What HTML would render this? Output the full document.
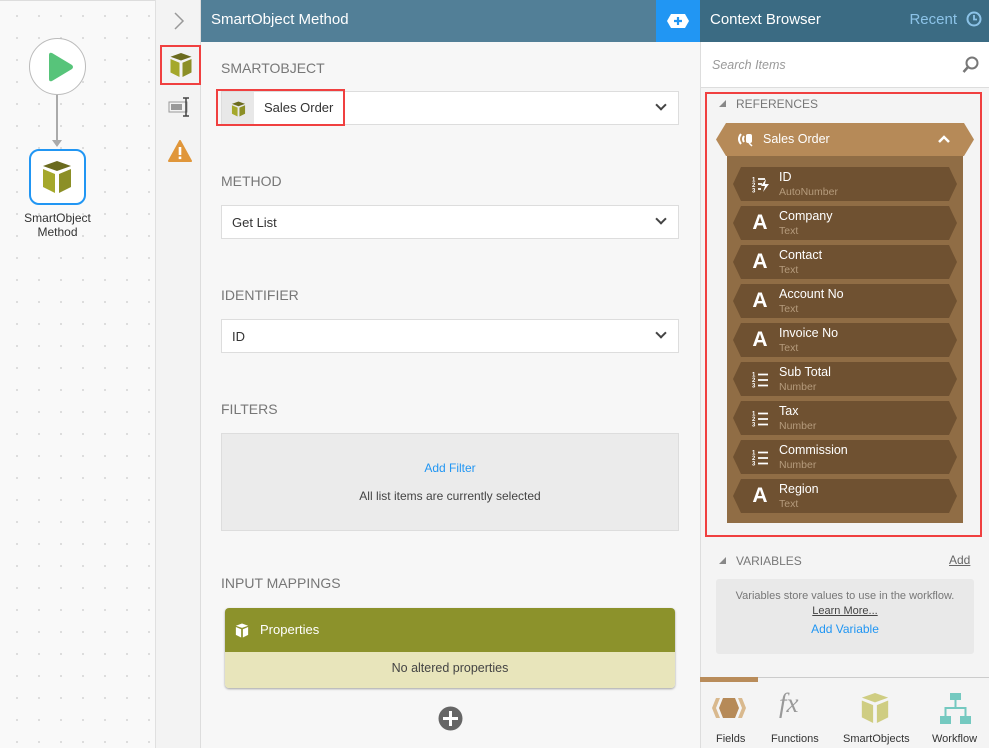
<!DOCTYPE html>
<html><head><meta charset="utf-8"><style>
*{box-sizing:border-box;margin:0;padding:0}
body{width:989px;height:748px;overflow:hidden;font-family:"Liberation Sans",sans-serif;background:#f8f8f8;position:relative}
.abs{position:absolute}
.canvas{left:0;top:0;width:155px;height:748px;background-color:#f9f9f9;background-image:radial-gradient(circle,#d4d4d4 0.8px,transparent 1px);background-size:22px 22px;background-position:6px 4px;border-top:1px solid #ddd}
.side{left:155px;top:0;width:46px;height:748px;background:#f3f3f3;border-left:1px solid #e0e0e0;border-right:1px solid #ddd}
.mid{left:201px;top:0;width:499px;height:748px;background:#f7f7f7}
.mh{left:201px;top:0;width:455px;height:42px;background:#527f97;color:#fff;font-size:15px;padding:11px 10px}
.lbl{color:#777;font-size:14px;left:221px}
.sel{left:221px;width:458px;height:34px;background:#fff;border:1px solid #ddd;font-size:13px;color:#333;padding:9px 10px}
.chev{position:absolute;right:13px;top:9px;width:8px;height:8px;border-right:2.5px solid #444;border-bottom:2.5px solid #444;transform:rotate(45deg)}
.right{left:700px;top:0;width:289px;height:748px;background:#f4f4f4;border-left:1px solid #ddd}
.rh{left:700px;top:0;width:289px;height:42px;background:#3b6b83;color:#fff;font-size:15px;padding:11px 10px}
.item{position:absolute;left:733px;width:224px;height:34px;background:#6f5131;clip-path:polygon(8px 0,216px 0,224px 50%,216px 100%,8px 100%,0 50%)}
.item .ic{position:absolute;left:19px;top:5px;color:#fff;font-weight:bold;font-size:21px;width:16px;text-align:center}
.item svg{position:absolute;left:19px;top:9px}
.item .n{position:absolute;left:46px;top:3px;color:#fff;font-size:12.5px}
.item .t{position:absolute;left:46px;top:19px;color:#b59b7c;font-size:10.5px}
.tab{position:absolute;top:733px;font-size:11px;color:#333;text-align:center}
</style></head><body>
<div class="abs canvas"></div>
<div class="abs" style="left:29px;top:38px;width:57px;height:57px;border-radius:50%;background:#fff;border:1px solid #bbb"></div>
<svg class="abs" style="left:46px;top:52px" width="28" height="30"><path d="M3 3 Q3 0 6 1 L26 13 Q28 15 26 17 L6 29 Q3 30 3 27Z" fill="#57c47a"/></svg>
<div class="abs" style="left:56px;top:95px;width:2px;height:48px;background:#aaa"></div>
<svg class="abs" style="left:52px;top:140px" width="10" height="8"><path d="M0 0 L10 0 L5 7Z" fill="#aaa"/></svg>
<div class="abs" style="left:29px;top:149px;width:57px;height:56px;border-radius:10px;background:#fff;border:2px solid #2196f3"></div>
<svg class="abs" style="left:41px;top:160px" width="32" height="34" viewBox="0 0 32 34"><path d="M16 1 L30 6 L16 11 L2 6Z" fill="#6b6b1e"/><path d="M2 9 L14 14 L14 33 L2 27Z" fill="#a5a82b"/><path d="M30 9 L18 14 L18 33 L30 27Z" fill="#8c8f26"/></svg>
<div class="abs" style="left:0;top:211px;width:115px;text-align:center;font-size:12px;color:#333;line-height:14px">SmartObject<br>Method</div>

<div class="abs side"></div>
<svg class="abs" style="left:173px;top:12px" width="12" height="18"><path d="M2 1 L10 9 L2 17" stroke="#999" stroke-width="1.5" fill="none"/></svg>
<div class="abs" style="left:160px;top:45px;width:41px;height:40px;border:2px solid #f04040"></div>
<svg class="abs" style="left:169px;top:52px" width="24" height="26" viewBox="0 0 32 34"><path d="M16 1 L30 6 L16 11 L2 6Z" fill="#6b6b1e"/><path d="M2 9 L14 14 L14 33 L2 27Z" fill="#a5a82b"/><path d="M30 9 L18 14 L18 33 L30 27Z" fill="#8c8f26"/></svg>
<svg class="abs" style="left:168px;top:96px" width="24" height="22"><rect x="1" y="6" width="18" height="10" fill="none" stroke="#999"/><rect x="3" y="8" width="11" height="6" fill="#999"/><path d="M18 2 V20 M15 2 H21 M15 20 H21" stroke="#444" stroke-width="1.5"/></svg>
<svg class="abs" style="left:168px;top:140px" width="24" height="22"><path d="M12 1 L23 21 L1 21Z" fill="#e0963a" stroke="#e0963a" stroke-linejoin="round" stroke-width="2"/><rect x="10.7" y="7" width="2.6" height="8" fill="#fff"/><rect x="10.7" y="16.5" width="2.6" height="2.6" fill="#fff"/></svg>

<div class="abs mid"></div>
<div class="abs mh">SmartObject Method</div>
<div class="abs" style="left:656px;top:0;width:44px;height:42px;background:#2196f3"></div>
<svg class="abs" style="left:666px;top:13px" width="24" height="16"><path d="M5 1 H19 L23 8 L19 15 H5 L1 8Z" fill="#fff"/><path d="M12 4 V12 M8 8 H16" stroke="#2196f3" stroke-width="2.2"/></svg>

<div class="abs lbl" style="top:60px">SMARTOBJECT</div>
<div class="abs sel" style="top:91px;padding:0"><div class="abs" style="left:0;top:0;width:32px;height:32px;background:#e8e8e8"></div>
<svg class="abs" style="left:9px;top:9px" width="15" height="16" viewBox="0 0 32 34"><path d="M16 1 L30 6 L16 11 L2 6Z" fill="#6b6b1e"/><path d="M2 9 L14 14 L14 33 L2 27Z" fill="#a5a82b"/><path d="M30 9 L18 14 L18 33 L30 27Z" fill="#8c8f26"/></svg>
<span class="abs" style="left:42px;top:8px">Sales Order</span><span class="chev"></span></div>
<div class="abs" style="left:216px;top:89px;width:129px;height:37px;border:2px solid #f04040"></div>

<div class="abs lbl" style="top:173px">METHOD</div>
<div class="abs sel" style="top:205px">Get List<span class="chev"></span></div>
<div class="abs lbl" style="top:287px">IDENTIFIER</div>
<div class="abs sel" style="top:319px">ID<span class="chev"></span></div>
<div class="abs lbl" style="top:401px">FILTERS</div>
<div class="abs" style="left:221px;top:433px;width:458px;height:98px;background:#ebebeb;border:1px solid #ddd;text-align:center;font-size:12px">
<div style="color:#2196f3;margin-top:27px">Add Filter</div><div style="color:#444;margin-top:14px">All list items are currently selected</div></div>
<div class="abs lbl" style="top:575px">INPUT MAPPINGS</div>
<div class="abs" style="left:225px;top:608px;width:450px;height:80px;border-radius:4px;box-shadow:0 1px 2px rgba(0,0,0,.35);overflow:hidden">
<div style="height:44px;background:#8c922b;color:#fff;font-size:13px;padding:14px 0 0 35px;position:relative">Properties
<svg class="abs" style="left:10px;top:15px" width="14" height="15" viewBox="0 0 32 34"><path d="M16 1 L30 6 L16 11 L2 6Z" fill="#fff"/><path d="M2 9 L14 14 L14 33 L2 27Z" fill="#fff"/><path d="M30 9 L18 14 L18 33 L30 27Z" fill="#fff"/></svg></div>
<div style="height:36px;background:#e8e5bb;text-align:center;font-size:12.5px;color:#444;padding-top:9px">No altered properties</div></div>
<svg class="abs" style="left:438px;top:706px" width="25" height="25"><circle cx="12.5" cy="12.5" r="12" fill="#666"/><path d="M12.5 5 V20 M5 12.5 H20" stroke="#fff" stroke-width="3"/></svg>

<div class="abs right"></div>
<div class="abs rh">Context Browser<span style="position:absolute;right:32px;top:11px;color:#8cc3e8">Recent</span>
<svg class="abs" style="right:7px;top:11px" width="16" height="16"><circle cx="8" cy="8" r="6.5" fill="none" stroke="#8cc3e8" stroke-width="2"/><path d="M8 4 V8.5 H11" stroke="#8cc3e8" stroke-width="1.8" fill="none"/></svg></div>
<div class="abs" style="left:701px;top:42px;width:288px;height:46px;background:#fff;border-bottom:1px solid #ddd"></div>
<div class="abs" style="left:712px;top:58px;font-size:12.5px;color:#999;font-style:italic">Search Items</div>
<svg class="abs" style="left:962px;top:56px" width="18" height="18"><circle cx="10" cy="7" r="5.5" fill="none" stroke="#777" stroke-width="2"/><path d="M6 11 L1.5 16" stroke="#777" stroke-width="2.5"/></svg>
<div class="abs" style="left:705px;top:92px;width:277px;height:445px;border:2px solid #f04040"></div>
<svg class="abs" style="left:719px;top:100px" width="7" height="7"><path d="M0 7 H7 V0Z" fill="#888"/></svg>
<div class="abs" style="left:736px;top:97px;font-size:12px;color:#777">REFERENCES</div>
<div class="abs" style="left:727px;top:155px;width:236px;height:368px;background:#906d45"></div>
<div class="abs" style="left:716px;top:123px;width:258px;height:33px;background:#b68a58;clip-path:polygon(10px 0,248px 0,258px 50%,248px 100%,10px 100%,0 50%)"></div>
<div class="abs" style="left:763px;top:132px;color:#fff;font-size:12.5px">Sales Order</div>
<svg class="abs" style="left:737px;top:131px" width="18" height="16"><path d="M4 3 Q0 8 4 13 M7 5 Q5 8 7 11" stroke="#fff" stroke-width="2" fill="none"/><rect x="9" y="3" width="6" height="9" rx="2" fill="#fff"/><path d="M12 12 L15 15" stroke="#fff" stroke-width="1.5"/></svg>
<svg class="abs" style="left:937px;top:134px" width="14" height="10"><path d="M2 8 L7 3 L12 8" stroke="#fff" stroke-width="2.5" fill="none"/></svg>

<div class="item" style="top:167px"><svg width="18" height="17"><text x="0" y="5.5" font-size="6" fill="#fff" font-weight="bold" font-family="Liberation Sans">1</text><text x="0" y="11" font-size="6" fill="#fff" font-weight="bold" font-family="Liberation Sans">2</text><text x="0" y="16.5" font-size="6" fill="#fff" font-weight="bold" font-family="Liberation Sans">3</text><path d="M6 3 H13 M6 8 H10 M6 13 H9" stroke="#fff" stroke-width="1.8"/><path d="M14 3 L9 10 H13 L11 16 L17 8 H13Z" fill="#fff"/></svg><span class="n">ID</span><span class="t">AutoNumber</span></div>
<div class="item" style="top:206px"><span class="ic">A</span><span class="n">Company</span><span class="t">Text</span></div>
<div class="item" style="top:245px"><span class="ic">A</span><span class="n">Contact</span><span class="t">Text</span></div>
<div class="item" style="top:284px"><span class="ic">A</span><span class="n">Account No</span><span class="t">Text</span></div>
<div class="item" style="top:323px"><span class="ic">A</span><span class="n">Invoice No</span><span class="t">Text</span></div>
<div class="item" style="top:362px"><svg width="18" height="17"><text x="0" y="5.5" font-size="6" fill="#fff" font-weight="bold" font-family="Liberation Sans">1</text><text x="0" y="11" font-size="6" fill="#fff" font-weight="bold" font-family="Liberation Sans">2</text><text x="0" y="16.5" font-size="6" fill="#fff" font-weight="bold" font-family="Liberation Sans">3</text><path d="M6 3.5 H16 M6 9 H16 M6 14.5 H16" stroke="#fff" stroke-width="1.8"/></svg><span class="n">Sub Total</span><span class="t">Number</span></div>
<div class="item" style="top:401px"><svg width="18" height="17"><text x="0" y="5.5" font-size="6" fill="#fff" font-weight="bold" font-family="Liberation Sans">1</text><text x="0" y="11" font-size="6" fill="#fff" font-weight="bold" font-family="Liberation Sans">2</text><text x="0" y="16.5" font-size="6" fill="#fff" font-weight="bold" font-family="Liberation Sans">3</text><path d="M6 3.5 H16 M6 9 H16 M6 14.5 H16" stroke="#fff" stroke-width="1.8"/></svg><span class="n">Tax</span><span class="t">Number</span></div>
<div class="item" style="top:440px"><svg width="18" height="17"><text x="0" y="5.5" font-size="6" fill="#fff" font-weight="bold" font-family="Liberation Sans">1</text><text x="0" y="11" font-size="6" fill="#fff" font-weight="bold" font-family="Liberation Sans">2</text><text x="0" y="16.5" font-size="6" fill="#fff" font-weight="bold" font-family="Liberation Sans">3</text><path d="M6 3.5 H16 M6 9 H16 M6 14.5 H16" stroke="#fff" stroke-width="1.8"/></svg><span class="n">Commission</span><span class="t">Number</span></div>
<div class="item" style="top:479px"><span class="ic">A</span><span class="n">Region</span><span class="t">Text</span></div>

<svg class="abs" style="left:719px;top:557px" width="7" height="7"><path d="M0 7 H7 V0Z" fill="#888"/></svg>
<div class="abs" style="left:736px;top:554px;font-size:12px;color:#777">VARIABLES</div>
<div class="abs" style="left:949px;top:553px;font-size:12px;color:#666;text-decoration:underline">Add</div>
<div class="abs" style="left:716px;top:579px;width:258px;height:75px;background:#e9e9e9;border-radius:3px;text-align:center;font-size:11px;color:#777">
<div style="margin-top:11px">Variables store values to use in the workflow.</div>
<div style="margin-top:3px;color:#444;text-decoration:underline">Learn More...</div>
<div style="margin-top:5px;color:#2196f3;font-size:12px">Add Variable</div></div>
<div class="abs" style="left:701px;top:677px;width:288px;height:71px;background:#f4f4f4;border-top:1px solid #ccc"></div>
<div class="abs" style="left:700px;top:677px;width:58px;height:5px;background:#b98c5a"></div>
<svg class="abs" style="left:712px;top:697px" width="34" height="22"><path d="M4 1 L0 11 L4 21 H8 L4 11 L8 1Z M30 1 L34 11 L30 21 H26 L30 11 L26 1Z" fill="#d9b98e"/><path d="M11 1 H23 L27 11 L23 21 H11 L7 11Z" fill="#b68a58"/></svg>
<div class="abs" style="left:779px;top:688px;font-family:'Liberation Serif',serif;font-style:italic;font-size:27px;color:#999">fx</div>
<svg class="abs" style="left:859px;top:692px" width="32" height="32" viewBox="0 0 32 34"><path d="M16 1 L30 6 L16 11 L2 6Z" fill="#cfcd82"/><path d="M2 9 L14 14 L14 33 L2 27Z" fill="#cfcd82"/><path d="M30 9 L18 14 L18 33 L30 27Z" fill="#cfcd82"/></svg>
<svg class="abs" style="left:940px;top:693px" width="32" height="31"><rect x="10" y="0" width="11" height="7" fill="#74c9c0"/><rect x="0" y="23" width="11" height="8" fill="#74c9c0"/><rect x="20" y="23" width="11" height="8" fill="#74c9c0"/><path d="M15.5 7 V15 M5.5 23 V15 H25.5 V23" stroke="#74c9c0" stroke-width="2" fill="none"/></svg>
<div class="tab" style="left:716px">Fields</div>
<div class="tab" style="left:771px">Functions</div>
<div class="tab" style="left:843px">SmartObjects</div>
<div class="tab" style="left:932px">Workflow</div>
</body></html>
